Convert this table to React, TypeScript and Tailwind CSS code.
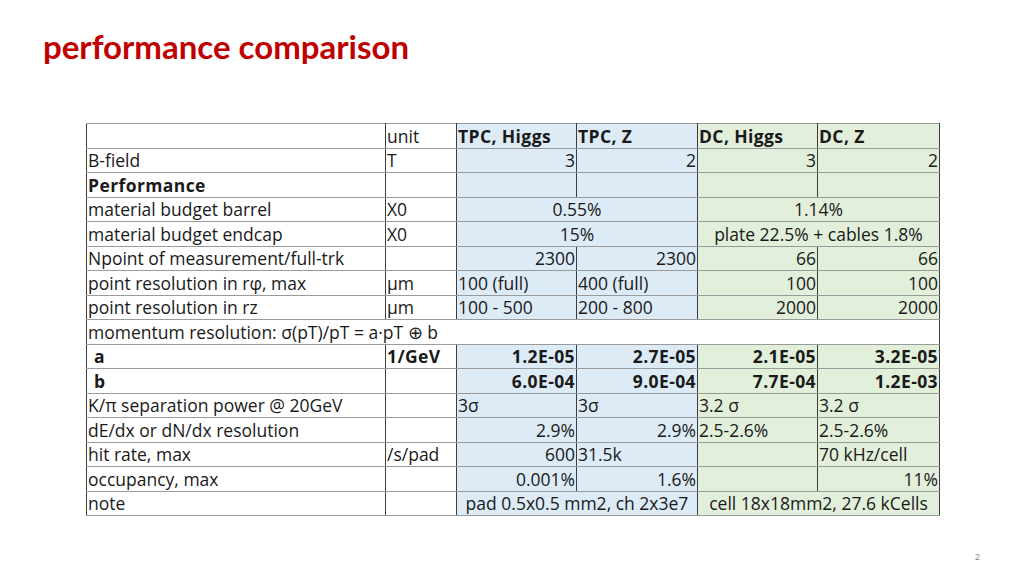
import React from "react";

type Cell = {
  text?: React.ReactNode;
  span?: number;
  align?: "left" | "right" | "center";
  bold?: boolean;
  bg?: "blue" | "green" | "white";
};

const blue = "bg-[#ddebf7]";
const green = "bg-[#e2efda]";

const rows: Cell[][] = [
  [
    { text: "" },
    { text: "unit" },
    { text: "TPC, Higgs", bold: true, bg: "blue" },
    { text: "TPC, Z", bold: true, bg: "blue" },
    { text: "DC, Higgs", bold: true, bg: "green" },
    { text: "DC, Z", bold: true, bg: "green" },
  ],
  [
    { text: "B-field" },
    { text: "T" },
    { text: "3", align: "right", bg: "blue" },
    { text: "2", align: "right", bg: "blue" },
    { text: "3", align: "right", bg: "green" },
    { text: "2", align: "right", bg: "green" },
  ],
  [
    { text: "Performance", bold: true },
    { text: "" },
    { text: "", bg: "blue" },
    { text: "", bg: "blue" },
    { text: "", bg: "green" },
    { text: "", bg: "green" },
  ],
  [
    { text: "material budget barrel" },
    { text: "X0" },
    { text: "0.55%", span: 2, align: "center", bg: "blue" },
    { text: "1.14%", span: 2, align: "center", bg: "green" },
  ],
  [
    { text: "material budget endcap" },
    { text: "X0" },
    { text: "15%", span: 2, align: "center", bg: "blue" },
    { text: "plate 22.5% + cables 1.8%", span: 2, align: "center", bg: "green" },
  ],
  [
    { text: "Npoint of measurement/full-trk" },
    { text: "" },
    { text: "2300", align: "right", bg: "blue" },
    { text: "2300", align: "right", bg: "blue" },
    { text: "66", align: "right", bg: "green" },
    { text: "66", align: "right", bg: "green" },
  ],
  [
    { text: "point resolution in rφ, max" },
    { text: "μm" },
    { text: "100 (full)", bg: "blue" },
    { text: "400 (full)", bg: "blue" },
    { text: "100", align: "right", bg: "green" },
    { text: "100", align: "right", bg: "green" },
  ],
  [
    { text: "point resolution in rz" },
    { text: "μm" },
    { text: "100 - 500", bg: "blue" },
    { text: "200 - 800", bg: "blue" },
    { text: "2000", align: "right", bg: "green" },
    { text: "2000", align: "right", bg: "green" },
  ],
  [{ text: "momentum resolution: σ(pT)/pT = a·pT ⊕ b", span: 6 }],
  [
    { text: <span className="pl-[6px]">a</span>, bold: true },
    { text: "1/GeV", bold: true },
    { text: "1.2E-05", align: "right", bold: true, bg: "blue" },
    { text: "2.7E-05", align: "right", bold: true, bg: "blue" },
    { text: "2.1E-05", align: "right", bold: true, bg: "green" },
    { text: "3.2E-05", align: "right", bold: true, bg: "green" },
  ],
  [
    { text: <span className="pl-[6px]">b</span>, bold: true },
    { text: "" },
    { text: "6.0E-04", align: "right", bold: true, bg: "blue" },
    { text: "9.0E-04", align: "right", bold: true, bg: "blue" },
    { text: "7.7E-04", align: "right", bold: true, bg: "green" },
    { text: "1.2E-03", align: "right", bold: true, bg: "green" },
  ],
  [
    { text: "K/π separation power @ 20GeV" },
    { text: "" },
    { text: "3σ", bg: "blue" },
    { text: "3σ", bg: "blue" },
    { text: "3.2 σ", bg: "green" },
    { text: "3.2 σ", bg: "green" },
  ],
  [
    { text: "dE/dx or dN/dx resolution" },
    { text: "" },
    { text: "2.9%", align: "right", bg: "blue" },
    { text: "2.9%", align: "right", bg: "blue" },
    { text: "2.5-2.6%", bg: "green" },
    { text: "2.5-2.6%", bg: "green" },
  ],
  [
    { text: "hit rate, max" },
    { text: "/s/pad" },
    { text: "600", align: "right", bg: "blue" },
    { text: "31.5k", bg: "blue" },
    { text: "", bg: "green" },
    { text: "70 kHz/cell", bg: "green" },
  ],
  [
    { text: "occupancy, max" },
    { text: "" },
    { text: "0.001%", align: "right", bg: "blue" },
    { text: "1.6%", align: "right", bg: "blue" },
    { text: "", bg: "green" },
    { text: "11%", align: "right", bg: "green" },
  ],
  [
    { text: "note" },
    { text: "" },
    { text: "pad 0.5x0.5 mm2, ch 2x3e7", span: 2, align: "center", bg: "blue" },
    { text: "cell 18x18mm2, 27.6 kCells", span: 2, align: "center", bg: "green" },
  ],
];

function TableCell({ cell }: { cell: Cell }) {
  const align =
    cell.align === "right" ? "text-right" : cell.align === "center" ? "text-center" : "text-left";
  const bg = cell.bg === "blue" ? blue : cell.bg === "green" ? green : "bg-white";
  const weight = cell.bold ? "font-bold tracking-[0.4px]" : "font-normal";
  return (
    <td
      colSpan={cell.span ?? 1}
      className={`h-[24.5px] border-y border-y-[#9a9a9a] border-x border-x-[#3c3c3c] px-[1px] pt-[1px] pb-0 leading-none whitespace-nowrap overflow-hidden ${align} ${bg} ${weight}`}
    >
      {cell.text}
    </td>
  );
}

export default function App() {
  return (
    <div className="w-[1024px] h-[576px] bg-white relative overflow-hidden font-['Liberation_Sans',sans-serif] text-[#1a1a1a]">
      <h1 className="pl-[43px] pt-[26px] text-[33px] font-bold font-['Lato',sans-serif] text-[#c00000] leading-tight">
        performance comparison
      </h1>

      <div className="pl-[86px] pt-[56px]">
        <table className="table-fixed border-collapse border border-[#6a6a6a] font-['Open_Sans',sans-serif] text-[17.5px] w-[853px]">
          <colgroup>
            <col className="w-[299px]" />
            <col className="w-[71px]" />
            <col className="w-[120px]" />
            <col className="w-[121px]" />
            <col className="w-[120px]" />
            <col className="w-[122px]" />
          </colgroup>
          <tbody>
            {rows.map((row, i) => (
              <tr key={i}>
                {row.map((c, j) => (
                  <TableCell key={j} cell={c} />
                ))}
              </tr>
            ))}
          </tbody>
        </table>
      </div>

      {/* slide number */}
      <div className="absolute right-[44px] bottom-[12px] text-[9px] text-[#888]">2</div>
    </div>
  );
}
